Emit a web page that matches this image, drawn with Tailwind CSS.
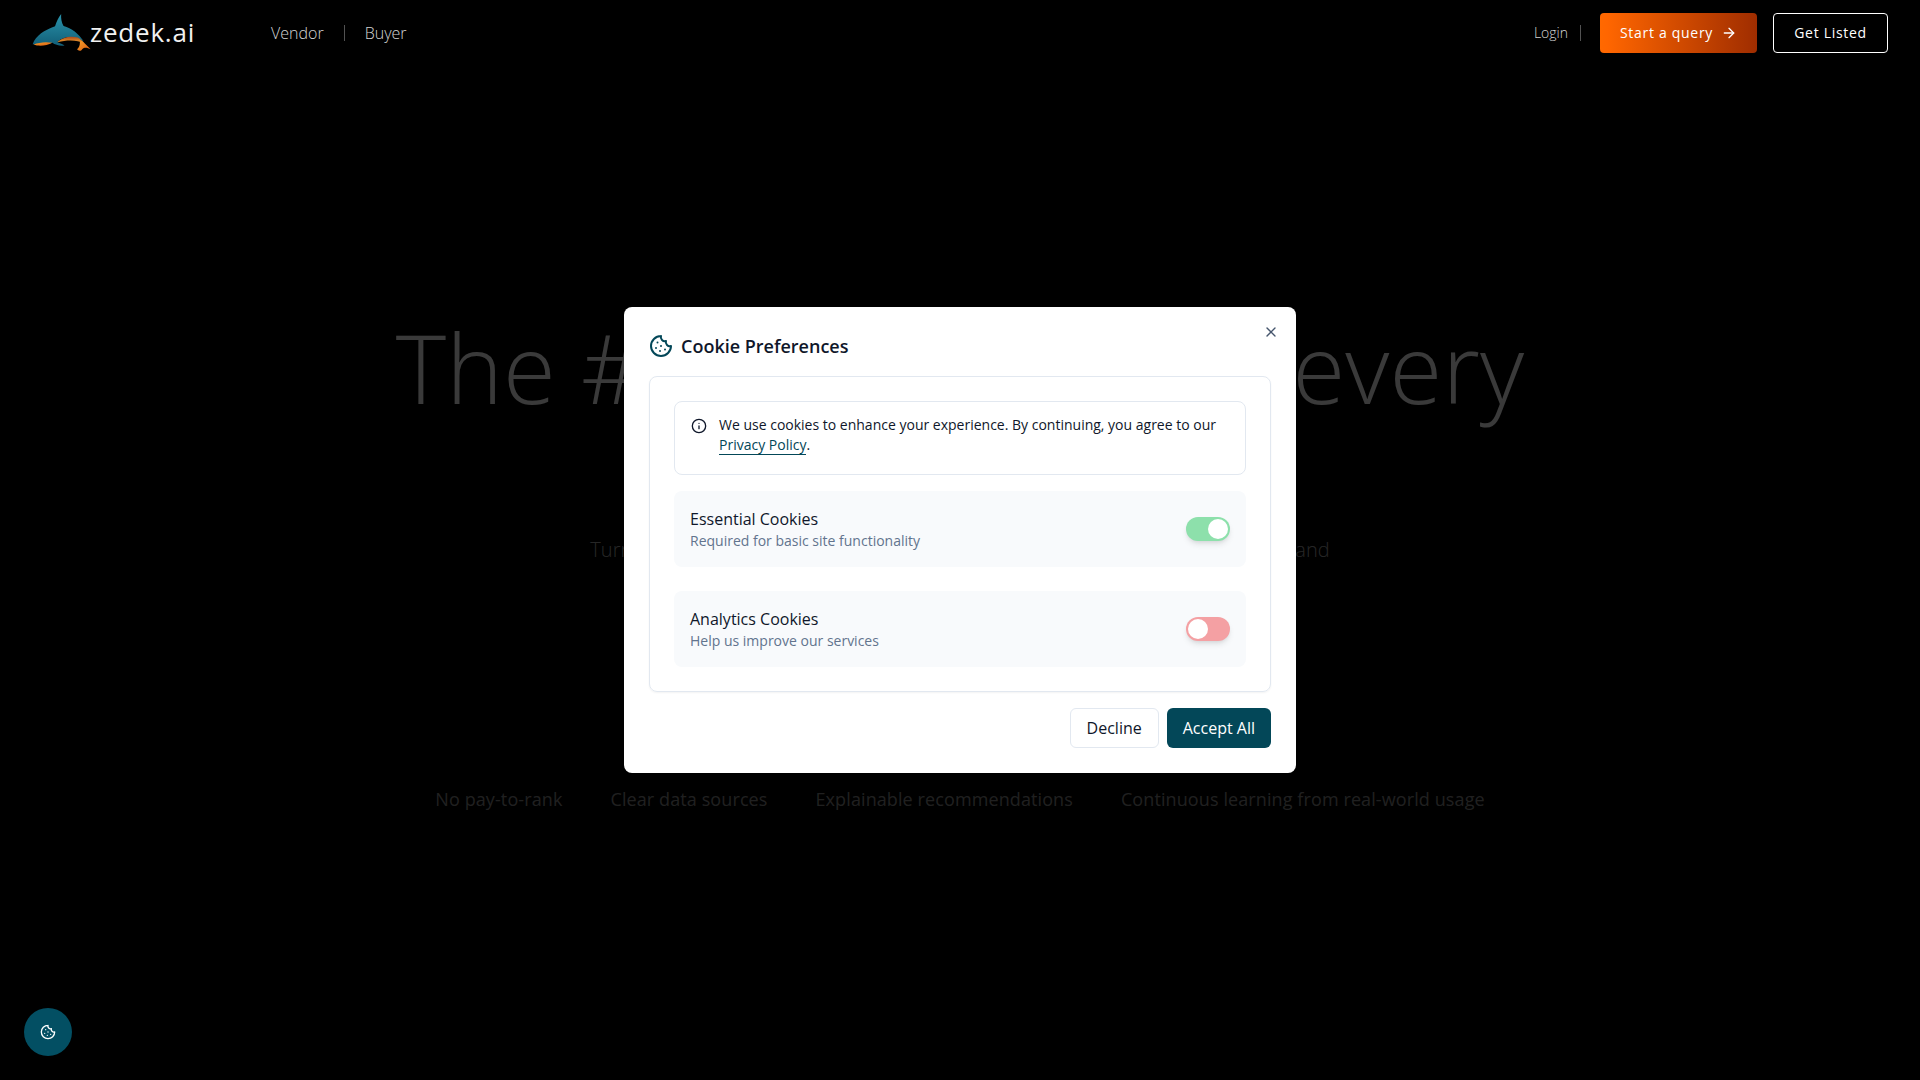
<!DOCTYPE html>
<html lang="en">
<head>
    <meta charset="UTF-8">
    <meta name="viewport" content="width=device-width, initial-scale=1.0">
    <title>zedek.ai</title>
    <script src="https://cdn.jsdelivr.net/npm/@tailwindcss/browser@4"></script>
</head>
<body class="bg-black font-['Open_Sans',sans-serif] text-white overflow-hidden">
    <div class="relative h-[1080px] w-[1920px]">

        <!-- Hero, dimmed by the overlay below -->
        <main class="flex h-full flex-col items-center pt-[307px] text-center">
            <h1 class="text-[96px] leading-[120px] font-light tracking-[0.15px] text-white/90 whitespace-nowrap">The #1 AI search for every</h1>
            <p class="mt-[109px] text-xl leading-7 font-light text-white/60 whitespace-nowrap">Turn buyer questions into clear answers from listed vendors you can compare and</p>
            <ul class="mt-[221px] flex gap-12 text-lg leading-7 tracking-[0.1px] text-white/50">
                <li>No pay-to-rank</li>
                <li>Clear data sources</li>
                <li>Explainable recommendations</li>
                <li>Continuous learning from real-world usage</li>
            </ul>
        </main>

        <!-- Overlay + cookie modal -->
        <div class="absolute inset-0 flex items-center justify-center bg-black/75">
            <div class="relative h-[466px] w-[672px] rounded-lg bg-white p-[25px] text-[#0f172a]">
                <button class="absolute top-[17px] right-[17px] text-slate-600">
                    <svg class="h-4 w-4" viewBox="0 0 24 24" fill="none" stroke="currentColor" stroke-width="2" stroke-linecap="round" stroke-linejoin="round"><path d="M18 6 6 18"/><path d="m6 6 12 12"/></svg>
                </button>

                <div class="flex h-[44px] items-start gap-2 pt-[2px]">
                    <svg class="h-6 w-6 text-[#034758]" viewBox="0 0 24 24" fill="none" stroke="currentColor" stroke-width="2" stroke-linecap="round" stroke-linejoin="round"><path d="M12 2a10 10 0 1 0 10 10 4 4 0 0 1-5-5 4 4 0 0 1-5-5"/><path d="M8.5 8.5v.01"/><path d="M16 15.5v.01"/><path d="M12 12v.01"/><path d="M11 17v.01"/><path d="M7 14v.01"/></svg>
                    <h2 class="text-lg leading-6 font-semibold">Cookie Preferences</h2>
                </div>

                <div class="flex h-[316px] flex-col rounded-lg border border-slate-200 p-6 shadow-xs">
                    <div class="flex h-[74px] gap-2 rounded-lg border border-slate-200 py-[13px] pr-[17px] pl-4 text-sm leading-5">
                        <svg class="mt-[3px] h-4 w-4 shrink-0" viewBox="0 0 24 24" fill="none" stroke="currentColor" stroke-width="2" stroke-linecap="round" stroke-linejoin="round"><circle cx="12" cy="12" r="10"/><path d="M12 16v-4"/><path d="M12 8h.01"/></svg>
                        <p class="ml-1">We use cookies to enhance your experience. By continuing, you agree to our <a href="#" class="border-b border-[#034758] text-[#034758]">Privacy Policy</a>.</p>
                    </div>

                    <div class="mt-4 flex h-[76px] items-center justify-between rounded-lg bg-slate-50 pr-4 pl-4">
                        <div>
                            <div class="text-base leading-6">Essential Cookies</div>
                            <div class="text-sm leading-5 text-slate-500">Required for basic site functionality</div>
                        </div>
                        <div class="flex h-6 w-11 items-center justify-end rounded-full bg-[#8de0ab] p-0.5 shadow-md">
                            <span class="h-5 w-5 rounded-full bg-white"></span>
                        </div>
                    </div>

                    <div class="mt-6 flex h-[76px] items-center justify-between rounded-lg bg-slate-50 pr-4 pl-4">
                        <div>
                            <div class="text-base leading-6">Analytics Cookies</div>
                            <div class="text-sm leading-5 text-slate-500">Help us improve our services</div>
                        </div>
                        <div class="flex h-6 w-11 items-center rounded-full bg-[#f4a0a3] p-0.5 shadow-md">
                            <span class="h-5 w-5 rounded-full bg-white"></span>
                        </div>
                    </div>
                </div>

                <div class="mt-4 flex justify-end gap-2">
                    <button class="h-10 rounded-md border border-slate-200 bg-white px-4 text-base">Decline</button>
                    <button class="h-10 rounded-md bg-[#034758] px-4 text-base text-white">Accept All</button>
                </div>
            </div>
        </div>

        <!-- Header sits above the overlay -->
        <header class="absolute top-0 left-0 flex h-[66px] w-full items-center pr-8 pl-8">
            <a href="#" class="flex items-center">
                <svg class="-mt-[3px] h-[38px] w-[59px]" viewBox="36 28 172 112">
                    <defs>
                        <linearGradient id="body" x1="0" y1="0" x2="0" y2="1"><stop offset="0" stop-color="#2a93ab"/><stop offset="1" stop-color="#125f78"/></linearGradient>
                        <linearGradient id="belly" x1="0" y1="0" x2="0" y2="1"><stop offset="0" stop-color="#a9481c"/><stop offset="1" stop-color="#f6a32e"/></linearGradient>
                        <linearGradient id="fin" x1="0" y1="0" x2="1" y2="1"><stop offset="0" stop-color="#f59e2b"/><stop offset="1" stop-color="#d9590f"/></linearGradient>
                    </defs>
                    <path fill="url(#body)" d="M37 120C46 94 72 78 103 67C107 54 113 42 121 31C120 44 122 56 128 66C152 72 172 88 188 112C170 100 150 96 134 100C122 103 114 108 110 114C118 117 125 119 131 124C116 126 104 122 95 116C78 120 55 123 37 120Z"/>
                    <path fill="url(#belly)" d="M110 114C122 100 150 94 170 100C178 105 184 110 188 116C170 108 140 106 110 114Z"/>
                    <path fill="url(#fin)" d="M40 121C55 115 75 112 95 116C78 125 55 127 40 121Z"/>
                    <path fill="url(#fin)" d="M176 112C184 108 190 116 193 120L208 135C198 130 190 128 183 135C178 143 170 138 168 135C174 130 177 122 176 112Z"/>
                </svg>
                <span class="-mt-[2px] -ml-[1px] text-[26px] leading-none tracking-[0.03em] text-[#f1f1f1]">zedek.ai</span>
            </a>
            <nav class="ml-[76px] flex items-center text-base font-light text-neutral-300">
                <a href="#">Vendor</a>
                <span class="mx-5 h-4 w-px bg-neutral-600"></span>
                <a href="#">Buyer</a>
            </nav>
            <div class="ml-auto flex items-center">
                <a href="#" class="text-sm font-light text-neutral-300">Login</a>
                <span class="mr-[19px] ml-[12px] h-4 w-px bg-neutral-600"></span>
                <a href="#" class="flex h-10 w-[157px] items-center justify-center gap-2 rounded-sm bg-linear-to-r/srgb from-orange-500 to-orange-800 text-sm tracking-wider">
                    Start a query
                    <svg class="h-4 w-4" viewBox="0 0 24 24" fill="none" stroke="currentColor" stroke-width="2" stroke-linecap="round" stroke-linejoin="round"><path d="M5 12h14"/><path d="m12 5 7 7-7 7"/></svg>
                </a>
                <a href="#" class="ml-4 flex h-10 w-[115px] items-center justify-center rounded-sm border border-white text-sm tracking-wider">Get Listed</a>
            </div>
        </header>

        <button class="absolute bottom-6 left-6 flex h-12 w-12 items-center justify-center rounded-full bg-[#034f63]">
            <svg class="h-4 w-4" viewBox="0 0 24 24" fill="none" stroke="currentColor" stroke-width="2" stroke-linecap="round" stroke-linejoin="round"><path d="M12 2a10 10 0 1 0 10 10 4 4 0 0 1-5-5 4 4 0 0 1-5-5"/><path d="M8.5 8.5v.01"/><path d="M16 15.5v.01"/><path d="M12 12v.01"/><path d="M11 17v.01"/><path d="M7 14v.01"/></svg>
        </button>
    </div>
</body>
</html>
